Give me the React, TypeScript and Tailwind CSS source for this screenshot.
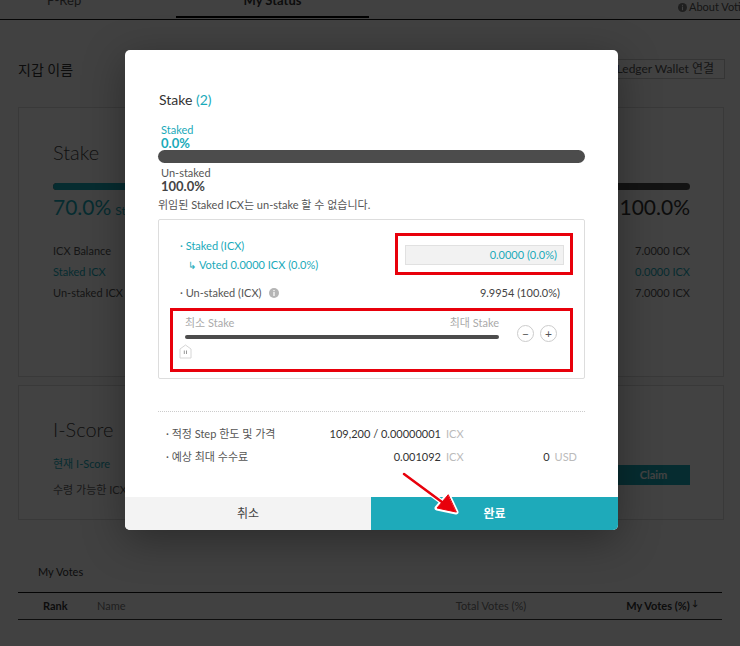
const TEAL = 'text-[#1aaaba]'

function InfoDot({ fill, size }: { fill: string; size: number }) {
  return (
    <svg width={size} height={size} viewBox="0 0 10 10" className="shrink-0">
      <circle cx="5" cy="5" r="5" fill={fill} />
      <rect x="4.4" y="4" width="1.2" height="4" fill="#fff" />
      <rect x="4.4" y="2" width="1.2" height="1.2" fill="#fff" />
    </svg>
  )
}

function PageBehind() {
  return (
    <div className="h-full bg-[#fbfbfb] text-[#333]">
      <nav className="relative flex h-[20px] border-b border-[#1a1a1a] text-[13px]">
        <div className="w-[176px] pl-[47px] -mt-[9px] text-[#555]">P-Rep</div>
        <div className="w-[193px] -mt-[9px] text-center font-bold border-b-2 border-black h-[27px]">My Status</div>
        <div className="ml-auto -mt-[4px] flex items-center gap-[2px] text-[11px] text-[#555] w-[62px] shrink-0 overflow-hidden">
          <InfoDot fill="#777" size={9} />
          <span className="whitespace-nowrap">About Voting</span>
        </div>
      </nav>

      <div className="flex items-center justify-between pl-[18px] pr-[15px] mt-[37px] h-[24px]">
        <span className="text-[14px]">지갑 이름</span>
        <span className="border border-[#ccc] bg-white pr-[10px] h-[20px] leading-[18px] text-[12px] text-[#555] w-[150px] text-right">Ledger Wallet 연결</span>
      </div>

      <section className="ml-[18px] mr-[16px] mt-[26px] h-[270px] border border-[#ddd] bg-white pl-[34px] pr-[33px] pt-[31px]">
        <h2 className="text-[20px] font-light leading-[26px] text-[#444]">Stake</h2>
        <div className="mt-[18px] flex h-[7px] rounded-full overflow-hidden bg-[#4c4c4c]">
          <div className="w-[70%] bg-[#1aaaba] rounded-full" />
        </div>
        <div className="flex justify-between items-baseline mt-[1px]">
          <div>
            <span className={`text-[21px] ${TEAL}`}>70.0%</span>
            <span className={`text-[12px] ml-1 ${TEAL}`}>Staked</span>
          </div>
          <span className="text-[21px] text-[#333]">100.0%</span>
        </div>
        <div className="mt-[20px] flex flex-col gap-[5px] text-[11px] leading-[16px]">
          <div className="flex justify-between"><span className="text-[#555]">ICX Balance</span><span className="text-[#555]">7.0000 ICX</span></div>
          <div className="flex justify-between"><span className={TEAL}>Staked ICX</span><span className={TEAL}>0.0000 ICX</span></div>
          <div className="flex justify-between"><span className="text-[#555]">Un-staked ICX</span><span className="text-[#555]">7.0000 ICX</span></div>
        </div>
      </section>

      <section className="ml-[18px] mr-[16px] mt-[8px] h-[135px] border border-[#ddd] bg-white pl-[34px] pr-[33px] pt-[30px]">
        <h2 className="text-[20px] font-light leading-[26px] text-[#444]">I-Score</h2>
        <div className="flex justify-between mt-[14px]">
          <div className="text-[11px] leading-[16px]">
            <div className={TEAL}>현재 I-Score</div>
            <div className="mt-[10px] text-[#666]">수령 가능한 ICX의 예상 수량</div>
          </div>
          <div className="mt-[9px] w-[73px] h-[20px] bg-[#1aaaba] text-white text-[11px] font-bold text-center leading-[20px]">Claim</div>
        </div>
      </section>

      <div className="pl-[38px] mt-[44px] text-[11px] leading-[16px] text-[#333]">My Votes</div>
      <div className="mx-[18px] mt-[12px] border-t border-[#111] border-b border-b-[#333] h-[28px] flex items-center text-[11px]">
        <span className="ml-[25px] w-[54px] font-bold">Rank</span>
        <span className="text-[#777]">Name</span>
        <span className="ml-auto text-[#777]">Total Votes (%)</span>
        <span className="ml-[100px] mr-[24px] font-bold">My Votes (%)<sup className="ml-0.5">↓</sup></span>
      </div>
    </div>
  )
}

function SliderHandle() {
  return (
    <svg width="13" height="15" viewBox="0 0 13 15" className="ml-[-6px] mt-[5px]">
      <path d="M1 5 L6.5 1 L12 5 L12 14 L1 14 Z" fill="#fff" stroke="#d6d6d6" />
      <line x1="5.3" y1="6.5" x2="5.3" y2="10" stroke="#999" />
      <line x1="7.5" y1="6.5" x2="7.5" y2="10" stroke="#999" />
    </svg>
  )
}

function StakeModal() {
  return (
    <div className="w-[493px] h-[480px] bg-white rounded-[5px] overflow-hidden shadow-[0_10px_40px_rgba(0,0,0,0.35)] flex flex-col ml-[3px]">
      <div className="flex-1 px-[33px] pt-[41px]">
        <h3 className="text-[14px] leading-[18px] text-[#333] pl-[1px]">
          Stake <span className={TEAL}>(2)</span>
        </h3>

        <div className={`mt-[14px] pl-[3px] text-[11px] leading-[13px] ${TEAL}`}>Staked</div>
        <div className={`pl-[3px] text-[13px] font-bold leading-[14px] ${TEAL}`}>0.0%</div>
        <div className="h-[13px] rounded-full bg-[#4c4c4c]" />
        <div className="mt-[3px] pl-[3px] text-[11px] leading-[13px] text-[#555]">Un-staked</div>
        <div className="pl-[3px] text-[13px] font-bold leading-[14px] text-[#444]">100.0%</div>
        <p className="mt-[5px] text-[11px] leading-[14px] text-[#555]">위임된 Staked ICX는 un-stake 할 수 없습니다.</p>

        <div className="mt-[7px] h-[160px] border border-[#ddd] rounded-[2px] px-[11px] pt-[13px] text-[11px]">
          <div className="flex justify-between">
            <div className={`pl-[10px] pt-[5px] leading-[16px] ${TEAL}`}>
              <div>· Staked (ICX)</div>
              <div className="mt-[3px] pl-[8px] flex items-center gap-[3px]">
                <span className="text-[10px]">↳</span>
                <span>Voted 0.0000 ICX (0.0%)</span>
              </div>
            </div>
            <div className="w-[178px] h-[42px] border-[3px] border-[#e8000b] pl-[7px] pr-[6px] pt-[9px]">
              <div className={`h-[20px] bg-[#f2f2f2] border border-[#e1e1e1] text-right pr-[6px] leading-[18px] ${TEAL}`}>0.0000 (0.0%)</div>
            </div>
          </div>

          <div className="mt-[10px] flex justify-between items-center leading-[16px] text-[#555]">
            <div className="pl-[10px] flex items-center gap-[7px]">
              <span>· Un-staked (ICX)</span>
              <InfoDot fill="#b5b5b5" size={10} />
            </div>
            <span className="pr-[13px] text-[#444]">9.9954 (100.0%)</span>
          </div>

          <div className="mt-[7px] h-[64px] border-[3px] border-[#e8000b] flex pl-[12px] pr-[13px]">
            <div className="w-[314px]">
              <div className="mt-[5px] flex justify-between text-[11px] leading-[14px] text-[#aaa]">
                <span>최소 Stake</span>
                <span>최대 Stake</span>
              </div>
              <div className="mt-[5px] h-[4px] rounded-full bg-[#4c4c4c]" />
              <SliderHandle />
            </div>
            <div className="ml-auto mt-[14px] flex gap-[6px]">
              <div className="w-[17px] h-[17px] rounded-full border border-[#ccc] flex items-center justify-center text-[12px] leading-none text-[#555]">−</div>
              <div className="w-[17px] h-[17px] rounded-full border border-[#ccc] flex items-center justify-center text-[12px] leading-none text-[#555]">+</div>
            </div>
          </div>
        </div>

        <div className="mt-[32px] border-t border-dotted border-[#ccc]" />

        <div className="mt-[14px] flex flex-col gap-[7px] text-[11px] leading-[16px]">
          <div className="flex items-center pl-[8px]">
            <span className="w-[160px] text-[#555]">· 적정 Step 한도 및 가격</span>
            <span className="w-[115px] text-right text-[#333]">109,200 / 0.00000001</span>
            <span className="ml-[5px] text-[#bbb]">ICX</span>
          </div>
          <div className="flex items-center pl-[8px]">
            <span className="w-[160px] text-[#555]">· 예상 최대 수수료</span>
            <span className="w-[115px] text-right text-[#333]">0.001092</span>
            <span className="ml-[5px] text-[#bbb]">ICX</span>
            <span className="ml-auto text-[#333]">0</span>
            <span className="ml-[5px] mr-[8px] text-[#bbb]">USD</span>
          </div>
        </div>
      </div>

      <div className="flex h-[33px] text-[12px]">
        <button className="flex-1 bg-[#f3f3f3] text-[#444]">취소</button>
        <button className="w-[247px] bg-[#1eaaba] text-white font-bold">완료</button>
      </div>
    </div>
  )
}

export default function App() {
  return (
    <div className="relative w-[740px] h-[646px] overflow-hidden font-['Lato','Noto_Sans_CJK_KR',sans-serif]">
      <PageBehind />
      <div className="absolute inset-0 bg-black/[0.74] flex justify-center pt-[50px]">
        <StakeModal />
      </div>
      <svg className="absolute left-0 top-0 pointer-events-none" width="740" height="646">
        <g stroke="#fff" strokeWidth="5" strokeLinecap="round" fill="#fff">
          <line x1="404" y1="474" x2="446" y2="505" />
          <path d="M456 512 L437 508 L448 495 Z" strokeLinejoin="round" />
        </g>
        <g stroke="#e8000b" strokeWidth="2.5" strokeLinecap="round" fill="#e8000b">
          <line x1="404" y1="474" x2="446" y2="505" />
          <path d="M456 512 L437 508 L448 495 Z" strokeWidth="1" strokeLinejoin="round" />
        </g>
      </svg>
    </div>
  )
}
